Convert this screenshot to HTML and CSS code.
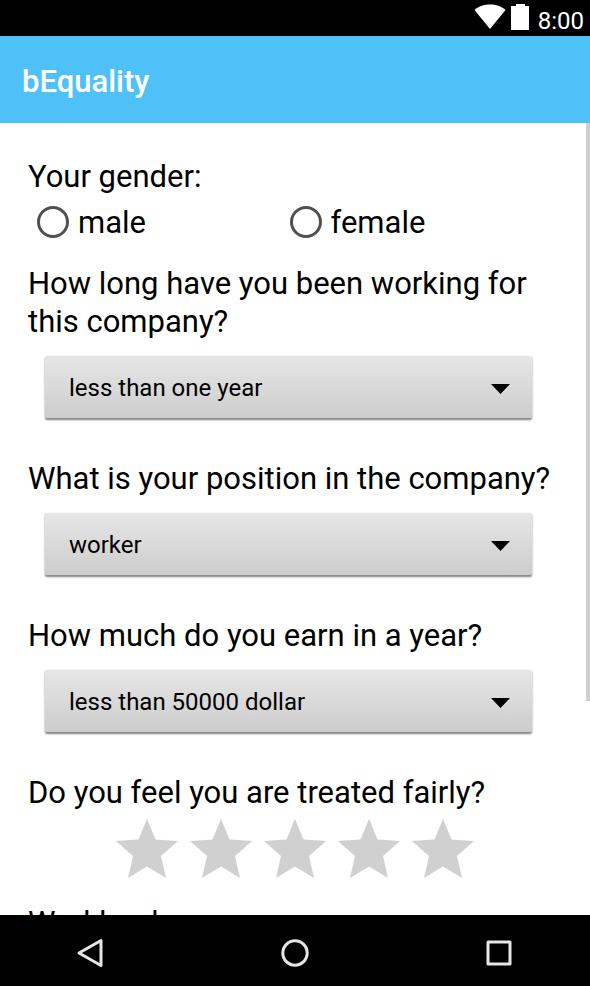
FILE: index.html
```html
<!DOCTYPE html>
<html lang="en">
<head>
<meta charset="utf-8">
<meta name="viewport" content="width=device-width, initial-scale=1">
<title>bEquality</title>
<link rel="stylesheet" href="styles.css">
</head>
<body>
<div class="status-bar">
  <svg class="wifi" viewBox="0 0 32 26" aria-hidden="true"><path d="M0.500 6C5 2 10 0.500 16 0.500S27 2 31.500 6L16 25Z"/></svg>
  <svg class="battery" viewBox="0 0 18 26" aria-hidden="true"><path d="M5 0h9v2h4v24H0V2h5Z"/></svg>
  <span class="clock">8:00</span>
</div>
<header class="app-bar"><h1 class="app-title">bEquality</h1></header>
<main class="content">
  <form class="survey">
    <fieldset class="group">
      <legend class="question">Your gender:</legend>
      <div class="choices">
        <label class="choice"><input class="radio" type="radio" name="gender" value="male">male</label>
        <label class="choice"><input class="radio" type="radio" name="gender" value="female">female</label>
      </div>
    </fieldset>
    <div class="group">
      <label class="question" for="tenure">How long have you been working for this company?</label>
      <div class="spinner"><select class="select" id="tenure"><option>less than one year</option></select></div>
    </div>
    <div class="group">
      <label class="question" for="position">What is your position in the company?</label>
      <div class="spinner"><select class="select" id="position"><option>worker</option></select></div>
    </div>
    <div class="group">
      <label class="question" for="salary">How much do you earn in a year?</label>
      <div class="spinner"><select class="select" id="salary"><option>less than 50000 dollar</option></select></div>
    </div>
    <fieldset class="group">
      <legend class="question">Do you feel you are treated fairly?</legend>
      <div class="stars">
        <label class="star"><input class="star-input" type="radio" name="fair" value="1" aria-label="1 star"><svg class="star-icon" viewBox="0 0 62 59"><path d="M31 0L39.500 20.500 62 22 45 37 50 59 31 47.500 12 59 17 37 0 22 22.500 20.500Z"/></svg></label>
        <label class="star"><input class="star-input" type="radio" name="fair" value="2" aria-label="2 stars"><svg class="star-icon" viewBox="0 0 62 59"><path d="M31 0L39.500 20.500 62 22 45 37 50 59 31 47.500 12 59 17 37 0 22 22.500 20.500Z"/></svg></label>
        <label class="star"><input class="star-input" type="radio" name="fair" value="3" aria-label="3 stars"><svg class="star-icon" viewBox="0 0 62 59"><path d="M31 0L39.500 20.500 62 22 45 37 50 59 31 47.500 12 59 17 37 0 22 22.500 20.500Z"/></svg></label>
        <label class="star"><input class="star-input" type="radio" name="fair" value="4" aria-label="4 stars"><svg class="star-icon" viewBox="0 0 62 59"><path d="M31 0L39.500 20.500 62 22 45 37 50 59 31 47.500 12 59 17 37 0 22 22.500 20.500Z"/></svg></label>
        <label class="star"><input class="star-input" type="radio" name="fair" value="5" aria-label="5 stars"><svg class="star-icon" viewBox="0 0 62 59"><path d="M31 0L39.500 20.500 62 22 45 37 50 59 31 47.500 12 59 17 37 0 22 22.500 20.500Z"/></svg></label>
      </div>
    </fieldset>
    <div class="question">Workload</div>
  </form>
  <div class="scrollbar"></div>
</main>
<nav class="nav-bar">
  <button class="nav-button" type="button" aria-label="Back"><svg class="nav-icon" viewBox="0 0 28 30"><path d="M25 2.500V27.500L3 15Z"/></svg></button>
  <button class="nav-button" type="button" aria-label="Home"><svg class="nav-icon" viewBox="0 0 28 30"><circle cx="14" cy="15" r="12.200"/></svg></button>
  <button class="nav-button" type="button" aria-label="Recent apps"><svg class="nav-icon" viewBox="0 0 28 30"><rect x="3" y="4" width="22" height="22"/></svg></button>
</nav>
</body>
</html>
```

FILE: styles.css
```css
* {
  box-sizing: border-box;
}

body {
  display: flex;
  flex-direction: column;
  height: 100vh;
  margin: 0;
  background: #fff;
  color: #000;
  font-family: Roboto, "Liberation Sans", sans-serif;
  font-size: 31px;
  line-height: 38px;
}

.status-bar {
  display: flex;
  flex: none;
  align-items: flex-start;
  justify-content: flex-end;
  height: 36px;
  padding: 4px 6px 0 0;
  background: #000;
  color: #fff;
}

.wifi {
  width: 32px;
  height: 26px;
  margin-right: 5px;
  fill: #fff;
}

.battery {
  width: 18px;
  height: 26px;
  margin-right: 9px;
  fill: #fff;
}

.clock {
  font-size: 24px;
  line-height: 34px;
}

.app-bar {
  display: flex;
  flex: none;
  align-items: center;
  height: 87px;
  padding: 4px 22px 0;
  background: #4fc1f9;
  color: #fff;
}

.app-title {
  margin: 0;
  font-size: 31px;
  font-weight: 500;
}

.content {
  position: relative;
  flex: 1;
  min-height: 0;
  overflow: hidden;
}

.survey {
  padding: 35px 28px 0;
}

.group {
  min-width: 0;
  margin: 0;
  padding: 0;
  border: 0;
}

.question {
  display: block;
  padding: 0;
}

.choices {
  display: grid;
  grid-template-columns: 1fr 1fr;
  margin-right: 29px;
  padding: 8px 0 23px;
}

.choice {
  display: flex;
  align-items: center;
  gap: 9px;
  padding-left: 9px;
}

.radio {
  appearance: none;
  width: 32px;
  height: 32px;
  margin: 0 0 3px;
  border: 3px solid #505050;
  border-radius: 50%;
}

.radio:checked {
  background: radial-gradient(circle, #505050 45%, transparent 50%);
}

.spinner {
  position: relative;
  margin: 15px 30px 41px 17px;
}

.spinner::after {
  position: absolute;
  top: 28px;
  right: 22px;
  width: 19px;
  height: 10px;
  background: #000;
  clip-path: polygon(0 0, 100% 0, 50% 100%);
  content: "";
  pointer-events: none;
}

.select {
  appearance: none;
  display: block;
  width: 100%;
  height: 63px;
  padding: 2px 48px 0 24px;
  border: 0;
  border-bottom: 1px solid #8c8c8c;
  border-radius: 2px;
  background: linear-gradient(to bottom, #e6e6e6, #cdcdcd);
  box-shadow: 0 1px 2px rgba(0, 0, 0, 0.5);
  color: #000;
  font-family: inherit;
  font-size: 24px;
}

.stars {
  display: flex;
  justify-content: center;
  gap: 12px;
  padding: 7px 0 26px;
}

.star {
  position: relative;
}

.star-input {
  position: absolute;
  inset: 0;
  margin: 0;
  opacity: 0;
}

.star-icon {
  display: block;
  width: 62px;
  height: 59px;
  fill: #d0d0d0;
}

.scrollbar {
  position: absolute;
  top: 0;
  right: 0;
  width: 4px;
  height: 73%;
  background: #cfcfcf;
}

.nav-bar {
  display: flex;
  flex: none;
  align-items: center;
  justify-content: space-between;
  height: 71px;
  padding: 4px 77px 0 76px;
  background: #000;
}

.nav-button {
  padding: 0;
  border: 0;
  background: none;
}

.nav-icon {
  display: block;
  width: 28px;
  height: 30px;
  fill: none;
  stroke: #e6e6e6;
  stroke-linejoin: round;
  stroke-width: 3;
}
```
